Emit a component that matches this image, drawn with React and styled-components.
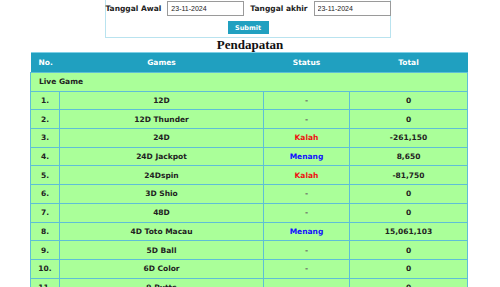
import React from "react"
import styled, { createGlobalStyle } from "styled-components"

const GlobalStyle = createGlobalStyle`
  body {
    margin: 0;
    background: #fff;
    font-family: "DejaVu Sans", Verdana, sans-serif;
  }
`

const Page = styled.div`
  display: flex;
  flex-direction: column;
  align-items: center;
  width: 500px;
  height: 287px;
  overflow: hidden;
`

const FilterBox = styled.form`
  display: flex;
  flex-direction: column;
  align-items: center;
  gap: 5px;
  width: 280px;
  margin-top: -7px;
  margin-left: -4px;
  padding: 8px 2px 3px;
  border: 1px solid #b9e3ef;
  border-top: none;
`

const FilterRow = styled.div`
  display: flex;
  align-items: center;
  gap: 6px;
`

const Label = styled.label`
  font-size: 7.5px;
  font-weight: bold;
  color: #222;
  white-space: nowrap;
`

const DateInput = styled.input`
  box-sizing: border-box;
  width: 77px;
  height: 15px;
  margin: 0;
  padding: 0 3px;
  border: 1px solid #9a9a9a;
  font-family: "Liberation Sans", Arial, sans-serif;
  font-size: 7px;
  color: #222;
`

const SubmitButton = styled.button`
  width: 41px;
  height: 13px;
  padding: 0;
  border: none;
  background: #20a0c0;
  color: #fff;
  font-family: "DejaVu Sans", Verdana, sans-serif;
  font-size: 6.5px;
  font-weight: bold;
`

const Title = styled.h1`
  margin: 0;
  height: 14px;
  line-height: 14px;
  font-family: "Liberation Serif", "Times New Roman", serif;
  font-size: 13px;
  font-weight: bold;
  color: #111;
`

const Table = styled.table`
  width: 437px;
  margin-left: -2px;
  border-collapse: collapse;
  font-size: 7.5px;
  font-weight: bold;
  color: #222;
  table-layout: fixed;
`

const HeadCell = styled.th`
  height: 19px;
  padding: 0;
  background: #20a0c0;
  color: #fff;
  font-weight: bold;
  text-align: ${({ $left }) => ($left ? "left" : "center")};
  padding-left: ${({ $left }) => ($left ? "8px" : "0")};
  border-top: 1px solid #7fd0e6;
`

const Row = styled.tr`
  height: 18.7px;
  background: #aaff99;
`

const Cell = styled.td`
  padding: 0;
  text-align: ${({ $left }) => ($left ? "left" : "center")};
  padding-left: ${({ $left }) => ($left ? "8px" : "0")};
  border: 1px solid #5ebfd6;
  color: ${({ $tone }) =>
    $tone === "win" ? "#1010ff" : $tone === "lose" ? "#ee1111" : $tone === "none" ? "#666" : "#222"};
`

const games = [
  ["12D", "-", "0"],
  ["12D Thunder", "-", "0"],
  ["24D", "Kalah", "-261,150"],
  ["24D Jackpot", "Menang", "8,650"],
  ["24Dspin", "Kalah", "-81,750"],
  ["3D Shio", "-", "0"],
  ["48D", "-", "0"],
  ["4D Toto Macau", "Menang", "15,061,103"],
  ["5D Ball", "-", "0"],
  ["6D Color", "-", "0"],
  ["9 Putts", "-", "0"],
]

const toneOf = (status) =>
  status === "Menang" ? "win" : status === "Kalah" ? "lose" : "none"

export default function App() {
  return (
    <Page>
      <GlobalStyle />
      <FilterBox onSubmit={(e) => e.preventDefault()}>
        <FilterRow>
          <Label>Tanggal Awal</Label>
          <DateInput defaultValue="23-11-2024" />
          <Label>Tanggal akhir</Label>
          <DateInput defaultValue="23-11-2024" />
        </FilterRow>
        <SubmitButton type="submit">Submit</SubmitButton>
      </FilterBox>
      <Title>Pendapatan</Title>
      <Table>
        <colgroup>
          <col style={{ width: 29 }} />
          <col style={{ width: 204 }} />
          <col style={{ width: 86 }} />
          <col style={{ width: 118 }} />
        </colgroup>
        <thead>
          <tr>
            <HeadCell $left>No.</HeadCell>
            <HeadCell>Games</HeadCell>
            <HeadCell>Status</HeadCell>
            <HeadCell>Total</HeadCell>
          </tr>
        </thead>
        <tbody>
          <Row>
            <Cell $left colSpan={4}>Live Game</Cell>
          </Row>
          {games.map(([name, status, total], i) => (
            <Row key={name}>
              <Cell>{i + 1}.</Cell>
              <Cell>{name}</Cell>
              <Cell $tone={toneOf(status)}>{status}</Cell>
              <Cell>{total}</Cell>
            </Row>
          ))}
        </tbody>
      </Table>
    </Page>
  )
}
